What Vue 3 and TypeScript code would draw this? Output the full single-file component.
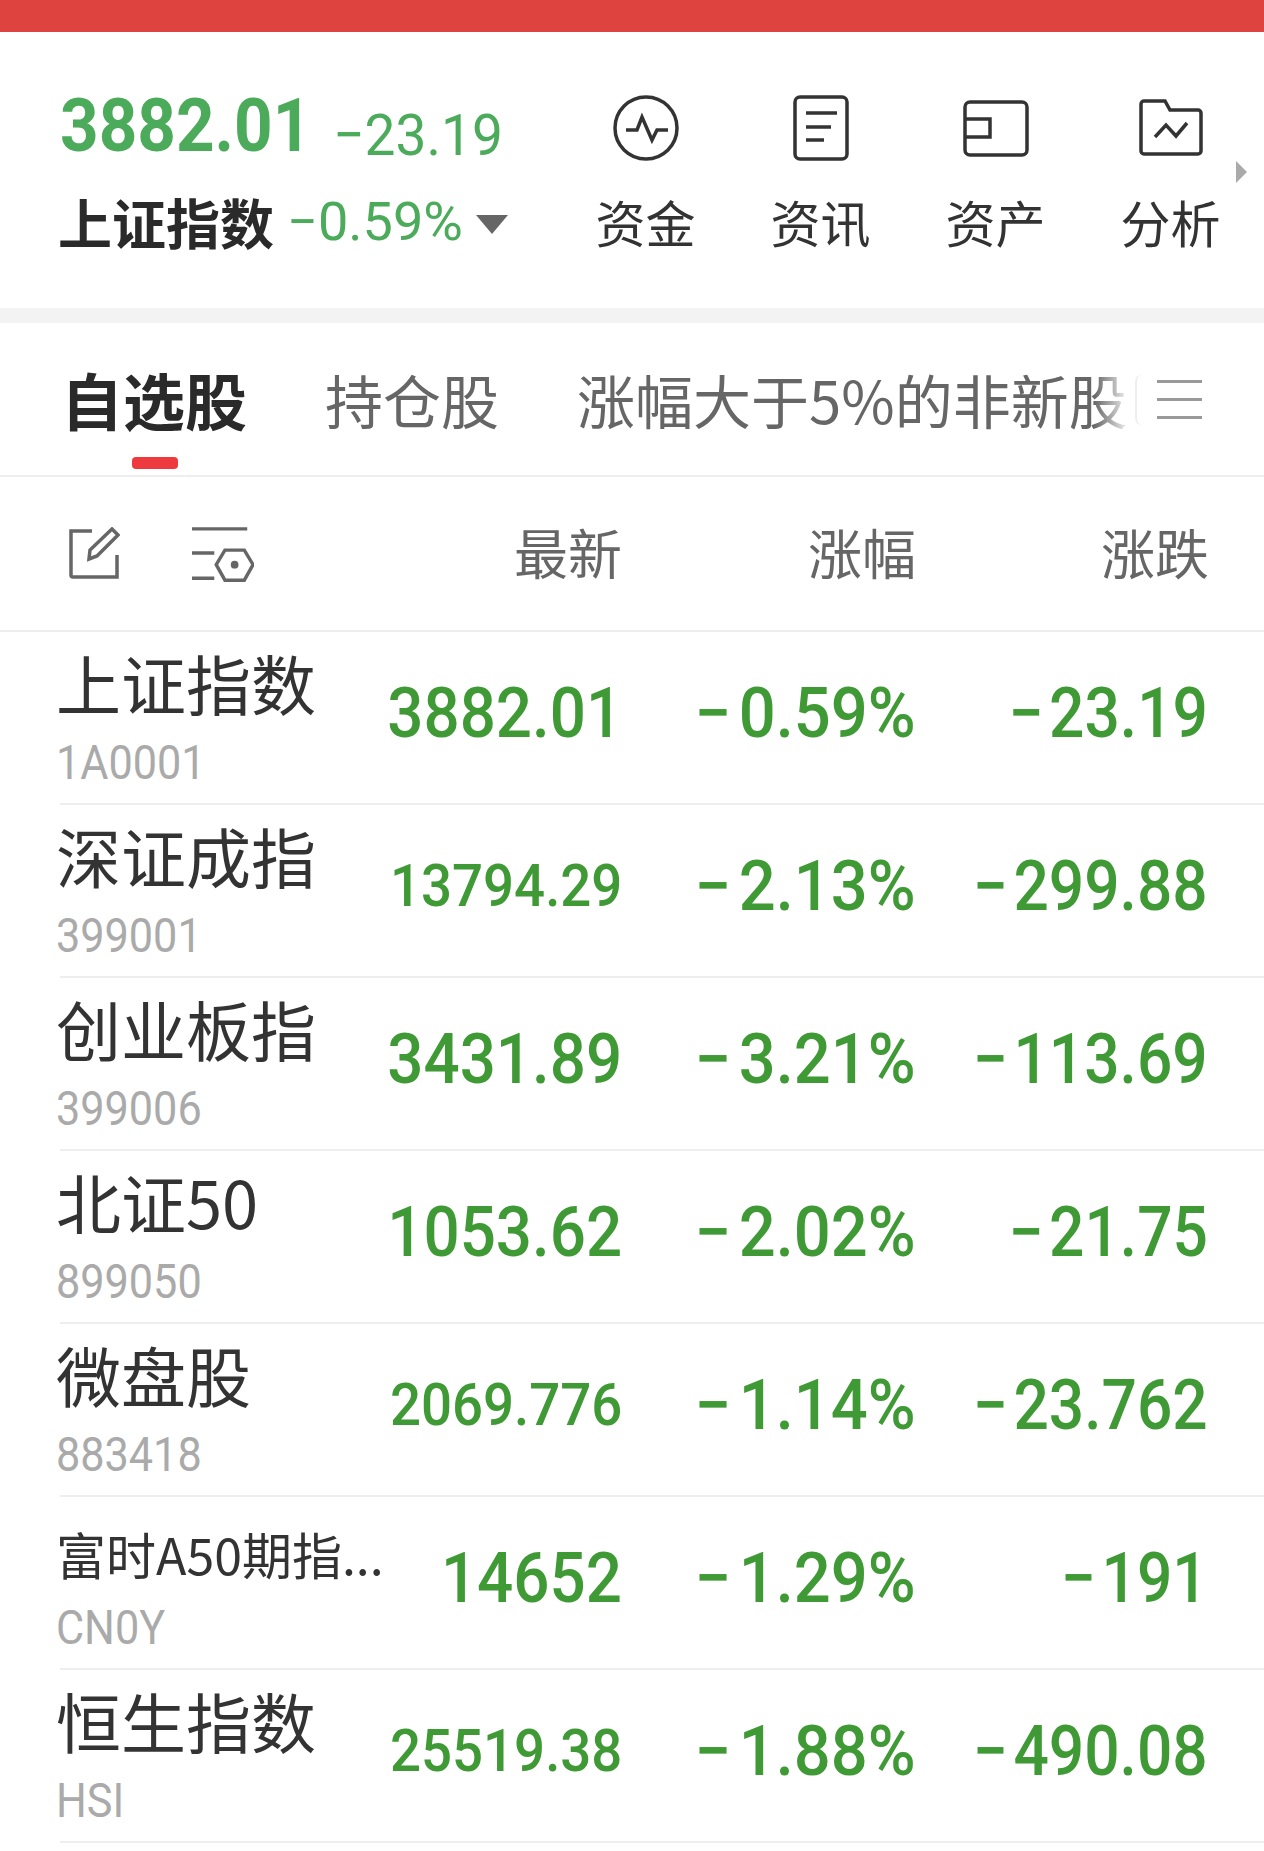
<template>
  <div class="page">
    <div class="top-bar"></div>

    <section class="index-panel">
      <div class="index-info">
        <div class="index-line">
          <span class="index-price">3882.01</span>
          <span class="index-change">−23.19</span>
        </div>
        <div class="index-line name-line">
          <span class="index-name">上证指数</span>
          <span class="index-percent">−0.59%</span>
          <span class="caret"></span>
        </div>
      </div>

      <nav class="shortcuts">
        <div class="shortcut">
          <svg class="shortcut-icon" viewBox="0 0 70 70">
            <circle cx="35" cy="35" r="31" />
            <path d="M15 37h11l5-13 10 23 5-10h11" />
          </svg>
          <span>资金</span>
        </div>
        <div class="shortcut">
          <svg class="shortcut-icon" viewBox="0 0 70 70">
            <rect x="9" y="4" width="52" height="62" rx="5" />
            <path d="M20 20h31M20 34h25M20 47h18" />
          </svg>
          <span>资讯</span>
        </div>
        <div class="shortcut">
          <svg class="shortcut-icon" viewBox="0 0 70 70">
            <rect x="4" y="9" width="62" height="53" rx="5" />
            <path d="M4 26h25v18H4" />
          </svg>
          <span>资产</span>
        </div>
        <div class="shortcut">
          <svg class="shortcut-icon" viewBox="0 0 70 70">
            <path d="M9 8h20l5 9h28a3 3 0 0 1 3 3v38a3 3 0 0 1-3 3H8a3 3 0 0 1-3-3V11a3 3 0 0 1 3-3z" />
            <path d="M19 44l11-12 10 11 11-13" />
          </svg>
          <span>分析</span>
        </div>
        <span class="more-arrow"></span>
      </nav>
    </section>

    <div class="band"></div>

    <section class="tabs">
      <div class="tab-list">
        <div class="tab active">自选股</div>
        <div class="tab">持仓股</div>
        <div class="tab">涨幅大于5%的非新股</div>
        <div class="tab-fade"></div>
      </div>
      <span class="next-chip"></span>
      <div class="tab-menu"><i></i><i></i><i></i></div>
    </section>

    <section class="table-head">
      <div class="head-tools">
        <svg class="edit-icon" viewBox="0 0 52 52">
          <path d="M24 4H3v44a2 2 0 0 0 2 2h44V28" />
          <path d="M21 32l1-9L44 2l6 6-21 21z" />
        </svg>
        <svg class="filter-icon" viewBox="0 0 64 58">
          <path d="M0 2h57M0 27h23M0 53h23" />
          <path d="M25 39l9-15h20l9 15-9 16H34z" />
          <circle cx="44" cy="39" r="4" class="dot" />
        </svg>
      </div>
      <div class="head-cell">最新</div>
      <div class="head-cell">涨幅</div>
      <div class="head-cell">涨跌</div>
    </section>

    <section class="rows">
      <div v-for="row in rows" :key="row.code" class="row">
        <div class="stock">
          <div class="stock-name" :class="{ small: row.small }">{{ row.name }}</div>
          <div class="stock-code"><span>{{ row.code }}</span></div>
        </div>
        <div class="value" :class="row.size"><span>{{ row.price }}</span></div>
        <div class="value percent"><span>{{ row.percent }}</span></div>
        <div class="value change"><span>{{ row.change }}</span></div>
      </div>
    </section>
  </div>
</template>

<script setup lang="ts">
interface StockRow {
  name: string
  code: string
  price: string
  percent: string
  change: string
  size: string
  small?: boolean
}

const rows: StockRow[] = [
  { name: '上证指数', code: '1A0001', price: '3882.01', percent: '−0.59%', change: '−23.19', size: 'large' },
  { name: '深证成指', code: '399001', price: '13794.29', percent: '−2.13%', change: '−299.88', size: 'tight' },
  { name: '创业板指', code: '399006', price: '3431.89', percent: '−3.21%', change: '−113.69', size: 'large' },
  { name: '北证50', code: '899050', price: '1053.62', percent: '−2.02%', change: '−21.75', size: 'large' },
  { name: '微盘股', code: '883418', price: '2069.776', percent: '−1.14%', change: '−23.762', size: 'tight' },
  { name: '富时A50期指...', code: 'CN0Y', price: '14652', percent: '−1.29%', change: '−191', size: 'large', small: true },
  { name: '恒生指数', code: 'HSI', price: '25519.38', percent: '−1.88%', change: '−490.08', size: 'tight' },
]
</script>

<style>
html,
body {
  margin: 0;
  background: #fff;
}
</style>

<style scoped>
.page {
  width: 1264px;
  height: 1851px;
  overflow: hidden;
  background: #fff;
  color: #333;
  font-family: "Noto Sans CJK SC", "Liberation Sans", sans-serif;
}

.top-bar {
  height: 32px;
  background: #de4340;
}

.index-panel {
  display: flex;
  height: 276px;
  box-sizing: border-box;
  padding: 61px 0 0 60px;
}

.index-info {
  width: 468px;
  margin-top: -3px;
  flex-shrink: 0;
}

.index-line {
  display: flex;
  align-items: center;
  font-family: Roboto, sans-serif;
  color: #4cab5b;
}

.index-line:first-child {
  height: 72px;
  align-items: flex-end;
}

.name-line {
  height: 60px;
  margin-top: 30px;
}

/* digits are a narrow DIN in the app, Roboto squeezed is the closest we have */
.index-price,
.index-change,
.index-percent {
  display: inline-block;
  flex-shrink: 0;
  white-space: nowrap;
  transform-origin: left center;
}

.index-price {
  width: 273px;
  font-size: 74px;
  line-height: 72px;
  font-weight: 700;
  transform: scaleX(0.91);
}

.index-change {
  margin: 0 0 -2px 0;
  font-size: 58px;
  line-height: 58px;
  transform: scaleX(0.95);
}

.index-name {
  margin-left: -2px;
  font-family: "Noto Sans CJK SC", sans-serif;
  font-size: 54px;
  line-height: 60px;
  font-weight: 700;
  color: #2a2a2a;
}

.index-percent {
  width: 172px;
  margin-left: 13px;
  font-size: 53px;
  line-height: 60px;
  transform: scaleX(1.02);
}

.caret {
  width: 0;
  height: 0;
  margin: 4px 0 0 17px;
  border-left: 16px solid transparent;
  border-right: 16px solid transparent;
  border-top: 19px solid #666;
}

.shortcuts {
  position: relative;
  display: grid;
  grid-template-columns: repeat(4, 175px);
  margin-left: 30px;
}

.shortcut {
  display: flex;
  flex-direction: column;
  align-items: center;
  font-size: 50px;
  line-height: 60px;
  color: #333;
}

.shortcut-icon {
  width: 70px;
  height: 70px;
  margin-bottom: 28px;
  fill: none;
  stroke: #333;
  stroke-width: 3.5;
}

.more-arrow {
  position: absolute;
  left: 678px;
  top: 68px;
  width: 0;
  height: 0;
  border-top: 11px solid transparent;
  border-bottom: 11px solid transparent;
  border-left: 11px solid #aaa;
}

.band {
  height: 15px;
  background: #f3f3f3;
}

.tabs {
  position: relative;
  display: flex;
  align-items: flex-start;
  height: 154px;
  box-sizing: border-box;
  padding: 34px 0 0 61px;
  border-bottom: 2px solid #eee;
}

.tab-list {
  position: relative;
  display: flex;
  gap: 78px;
  width: 1063px;
  flex-shrink: 0;
}

.tab {
  flex-shrink: 0;
  font-size: 58px;
  line-height: 84px;
  color: #666;
  white-space: nowrap;
}

.tab.active {
  font-size: 62px;
  font-weight: 700;
  color: #2a2a2a;
}

.tabs::after {
  content: "";
  position: absolute;
  left: 132px;
  top: 134px;
  width: 46px;
  height: 12px;
  border-radius: 4px;
  background: #ee3a3f;
}

.tab-fade {
  position: absolute;
  right: 0;
  top: 0;
  width: 30px;
  height: 100%;
  background: linear-gradient(to right, rgba(255, 255, 255, 0), rgba(255, 255, 255, 0.8));
}

.next-chip {
  width: 8px;
  height: 52px;
  margin: 17px 0 0 11px;
  border-left: 2px solid #eee;
  border-radius: 8px 0 0 8px;
}

.tab-menu {
  display: flex;
  flex-direction: column;
  gap: 15px;
  width: 45px;
  margin: 23px 0 0 12px;
}

.tab-menu i {
  display: block;
  height: 3px;
  background: #999;
}

.table-head {
  display: grid;
  grid-template-columns: 328px 232px 294px 293px;
  align-items: center;
  height: 155px;
  box-sizing: border-box;
  padding-left: 60px;
  border-bottom: 2px solid #eee;
}

.head-tools {
  display: flex;
  align-items: flex-start;
  gap: 72px;
  padding: 3px 0 0 8px;
}

.edit-icon {
  width: 52px;
  height: 52px;
  margin-top: 1px;
  fill: none;
  stroke: #666;
  stroke-width: 3.5;
}

.filter-icon {
  width: 62px;
  height: 58px;
  fill: none;
  stroke: #666;
  stroke-width: 3.5;
}

.filter-icon .dot {
  fill: #666;
  stroke: none;
}

.head-cell {
  margin: -4px -2px 0 0;
  text-align: right;
  font-size: 54px;
  line-height: 60px;
  color: #666;
}

.row {
  display: grid;
  grid-template-columns: 328px 232px 294px 293px;
  align-items: center;
  height: 173px;
  box-sizing: border-box;
  margin-left: 60px;
  border-bottom: 2px solid #eee;
}

.stock {
  padding-top: 9px;
  margin-left: -4px;
}

.stock-name {
  height: 76px;
  font-size: 65px;
  line-height: 78px;
  color: #333;
  white-space: nowrap;
}

.stock-name.small {
  font-size: 50px;
  line-height: 90px;
}

.stock-code {
  height: 76px;
  margin-top: 6px;
  font-family: Roboto, sans-serif;
  font-size: 48px;
  line-height: 76px;
  color: #aaa;
}

.stock-code span {
  display: inline-block;
  transform: scaleX(0.9);
  transform-origin: left center;
}

.value {
  display: flex;
  justify-content: flex-end;
  margin-right: -2px;
  padding-bottom: 10px;
  font-family: Roboto, sans-serif;
  font-weight: 500;
  font-size: 70px;
  line-height: 76px;
  color: #3f9a36;
  white-space: nowrap;
}

.value span {
  flex-shrink: 0;
  transform: scaleX(0.91);
  transform-origin: right center;
}

.value.percent span {
  transform: scaleX(0.93);
}

.value.change {
  margin-right: -1px;
}

.value.change span {
  transform: scaleX(0.89);
}

/* the minus sits apart from the digits */
.value.percent span::first-letter {
  margin-right: 8px;
}

.value.change span::first-letter {
  margin-right: 6px;
}

.value.tight {
  font-size: 60px;
}
</style>
